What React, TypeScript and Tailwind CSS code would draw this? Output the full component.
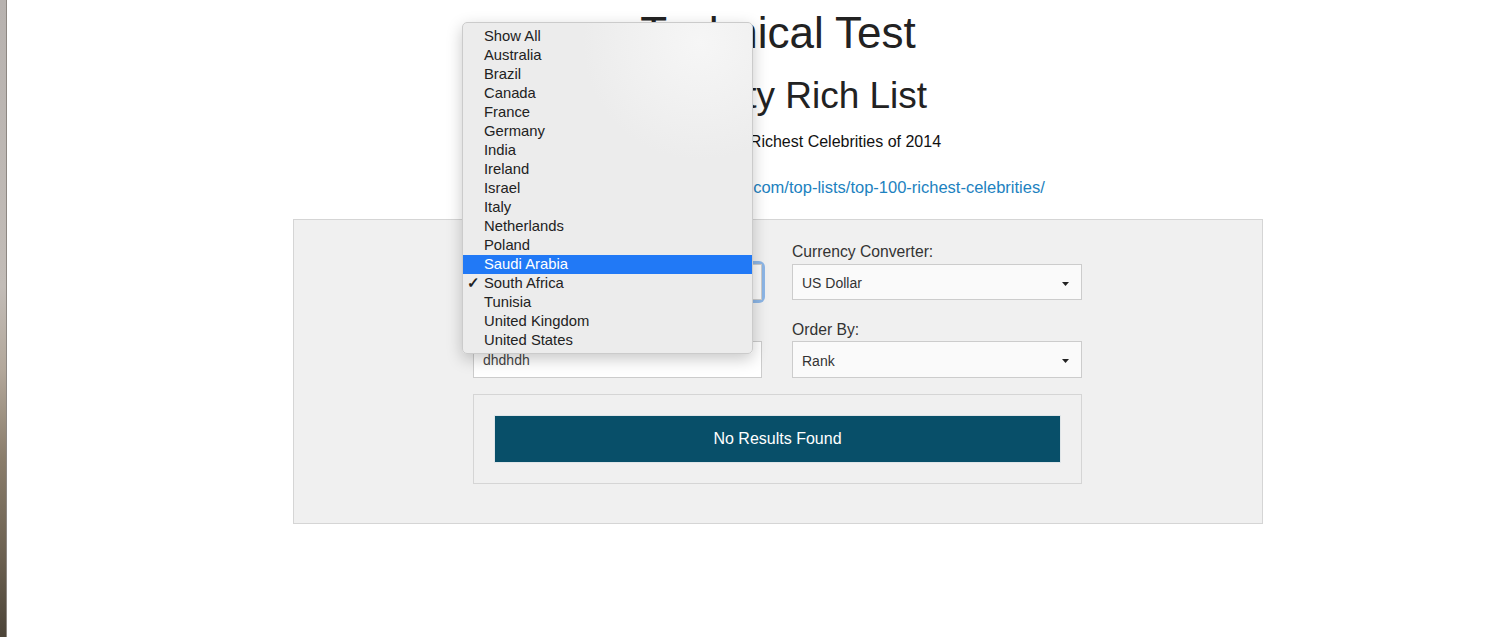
import React from "react";

const countries = [
  "Show All",
  "Australia",
  "Brazil",
  "Canada",
  "France",
  "Germany",
  "India",
  "Ireland",
  "Israel",
  "Italy",
  "Netherlands",
  "Poland",
  "Saudi Arabia",
  "South Africa",
  "Tunisia",
  "United Kingdom",
  "United States",
];

function Caret() {
  return (
    <svg width="7" height="4" viewBox="0 0 7 4" className="shrink-0">
      <polygon points="0,0 7,0 3.5,4" fill="#222" />
    </svg>
  );
}

function SelectBox({ value, tall }: { value: string; tall?: boolean }) {
  return (
    <div
      className={
        (tall ? "h-[37px] " : "h-[36px] ") +
        "bg-[#fafafa] border border-[#cccccc] flex items-center justify-between pl-[9px] pr-[12px] pt-[3px] text-[14px] text-[#333]"
      }
    >
      <span>{value}</span>
      <Caret />
    </div>
  );
}

export default function App() {
  return (
    <div className="flex w-full min-h-[637px] bg-white font-['Liberation_Sans',Arial,sans-serif] text-[#222]">
      <div className="w-[7px] shrink-0 self-stretch bg-[linear-gradient(to_bottom,#b7b2af_0%,#c2bcb7_45%,#b3a89b_58%,#8a7d6b_72%,#6a5f4f_88%,#4c4438_100%)] border-r border-[#8d8782]" />
      <div className="flex-1">
        <div className="relative w-[970px] ml-[286px]">
          <div className="text-center">
            <h1 className="pt-[9px] text-[44px] leading-[1.1] text-[#222]">Technical Test</h1>
            <h2 className="mt-[19px] text-[37px] leading-[1.1] text-[#222]">Celebrity Rich List</h2>
            <p className="mt-[15px] text-[16px] leading-[20px] text-[#111]">
              List of the Top 100 Richest Celebrities of 2014
            </p>
            <p className="mt-[25px] pl-[32px] text-[16.5px] leading-[20px]">
              <a className="text-[#1d82c0]">http://www.celebritynetworth.com/top-lists/top-100-richest-celebrities/</a>
            </p>
          </div>

          <div className="mt-[22px] border border-[#d5d5d5] bg-[#f0f0f0] pt-[22px] pb-[39px]">
            <div className="w-[609px] ml-[179px]">
              <div className="grid grid-cols-[289px_290px] gap-x-[30px]">
                <div>
                  <div className="text-[15.5px] leading-[20px] text-[#333] mb-[2px]">Filter By Country:</div>
                  <div className="rounded-[3px] shadow-[0_0_0_3px_#8db6e6]">
                    <SelectBox value="South Africa" />
                  </div>
                </div>
                <div>
                  <div className="text-[15.7px] leading-[20px] text-[#333] mb-[2px]">Currency Converter:</div>
                  <SelectBox value="US Dollar" />
                </div>
                <div className="mt-[20px]">
                  <div className="text-[15.5px] leading-[20px] text-[#333] mb-[1px]">Search:</div>
                  <div className="h-[37px] bg-white border border-[#cccccc] flex items-center pl-[9px] pt-[2px] text-[14px] text-[#444]">
                    dhdhdh
                  </div>
                </div>
                <div className="mt-[20px]">
                  <div className="text-[15.7px] leading-[20px] text-[#333] mb-[1px]">Order By:</div>
                  <SelectBox value="Rank" tall />
                </div>
              </div>

              <div className="mt-[16px] border border-[#d5d5d5] px-[20px] pt-[20px] pb-[20px]">
                <div className="h-[48px] bg-[#084f69] border border-[#dfe5e8] flex items-center justify-center text-white text-[16px]">
                  No Results Found
                </div>
              </div>
            </div>
          </div>

          <div className="absolute left-[169px] top-[22px] w-[291px] h-[332px] rounded-[5px] border border-[#cbcbcb] bg-[radial-gradient(circle_at_82%_6%,#f6f6f6_0%,#ececec_30%,#ececec_100%)] shadow-[0_5px_16px_rgba(0,0,0,0.22)] pt-[4px] text-[14.8px] text-[#222]">
            {countries.map((c) => {
              const hl = c === "Saudi Arabia";
              const checked = c === "South Africa";
              return (
                <div
                  key={c}
                  className={
                    hl
                      ? "h-[19px] flex items-center bg-[#2179f6] text-white"
                      : "h-[19px] flex items-center"
                  }
                >
                  <span className="w-[21px] shrink-0 text-[15px] font-bold pl-[4px]">{checked ? "✓" : ""}</span>
                  <span>{c}</span>
                </div>
              );
            })}
          </div>
        </div>
      </div>
    </div>
  );
}
